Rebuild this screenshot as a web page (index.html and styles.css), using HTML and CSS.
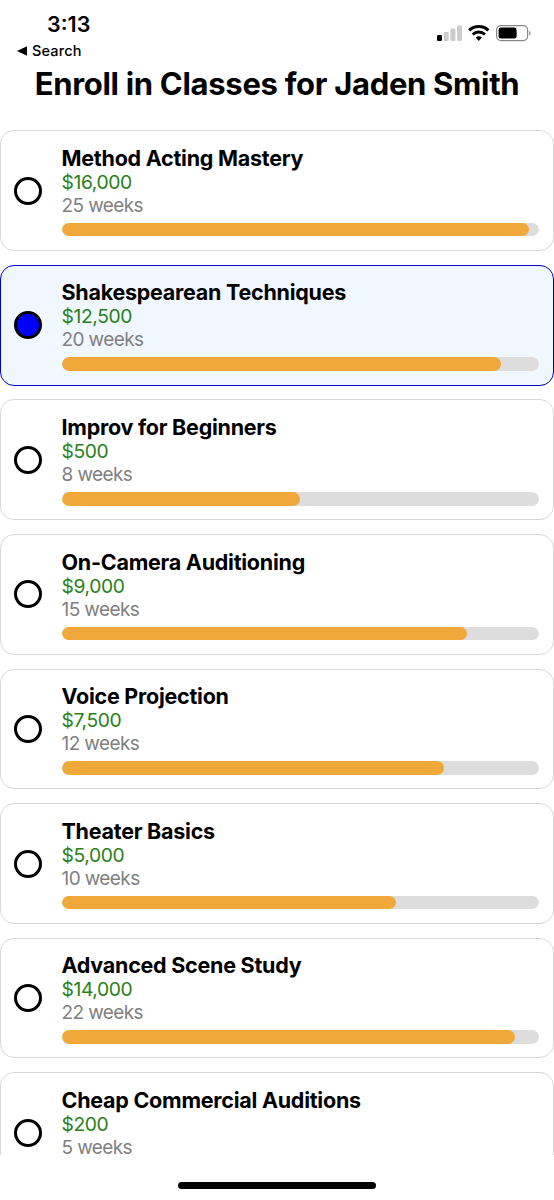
FILE: index.html
```html
<!DOCTYPE html>
<html lang="en">
<head>
    <meta charset="UTF-8">
    <meta name="viewport" content="width=device-width, initial-scale=1.0">
    <title>Enroll in Classes</title>
    <link rel="stylesheet" href="styles.css">
</head>
<body>
    <div class="status-bar">
        <div class="status-left">
            <div class="time">3:13</div>
            <div class="back">
                <svg class="back-arrow" viewBox="0 0 10 10"><path d="M0 5 L10 0.3 V9.7 Z"/></svg>
                <span>Search</span>
            </div>
        </div>
        <svg class="status-icons" width="96" height="20" viewBox="0 0 96 20">
            <!-- signal -->
            <rect x="1" y="12" width="5" height="6" rx="1.3" fill="#000"/>
            <rect x="7.7" y="9" width="5" height="9" rx="1.3" fill="#ccc"/>
            <rect x="14.4" y="5.5" width="5" height="12.5" rx="1.3" fill="#ccc"/>
            <rect x="21" y="2.5" width="5" height="15.5" rx="1.3" fill="#ccc"/>
            <!-- wifi -->
            <g fill="none" stroke="#000" stroke-width="3">
                <path d="M33.2 7.4 A14 14 0 0 1 52.4 7.4"/>
                <path d="M36.7 11.5 A8.8 8.8 0 0 1 48.9 11.5"/>
            </g>
            <path d="M39.7 14.6 A4.6 4.6 0 0 1 45.9 14.6 L42.8 17.9 Z" fill="#000"/>
            <!-- battery -->
            <rect x="60.6" y="2.6" width="31" height="15" rx="4.4" fill="#fff" stroke="#888" stroke-width="1.2"/>
            <rect x="62.6" y="4.6" width="18" height="11" rx="2.4" fill="#000"/>
            <path d="M93.2 7.8 A2.8 2.8 0 0 1 93.2 12.6 Z" fill="#888"/>
        </svg>
    </div>

    <h1>Enroll in Classes for Jaden Smith</h1>

    <div class="class-list">
        <div class="card">
            <div class="radio"></div>
            <div class="info">
                <div class="name">Method Acting Mastery</div>
                <div class="price">$16,000</div>
                <div class="weeks">25 weeks</div>
                <div class="progress"><div class="fill" style="width: 98%"></div></div>
            </div>
        </div>
        <div class="card selected">
            <div class="radio"></div>
            <div class="info">
                <div class="name">Shakespearean Techniques</div>
                <div class="price">$12,500</div>
                <div class="weeks">20 weeks</div>
                <div class="progress"><div class="fill" style="width: 92%"></div></div>
            </div>
        </div>
        <div class="card">
            <div class="radio"></div>
            <div class="info">
                <div class="name">Improv for Beginners</div>
                <div class="price">$500</div>
                <div class="weeks">8 weeks</div>
                <div class="progress"><div class="fill" style="width: 50%"></div></div>
            </div>
        </div>
        <div class="card">
            <div class="radio"></div>
            <div class="info">
                <div class="name">On-Camera Auditioning</div>
                <div class="price">$9,000</div>
                <div class="weeks">15 weeks</div>
                <div class="progress"><div class="fill" style="width: 85%"></div></div>
            </div>
        </div>
        <div class="card">
            <div class="radio"></div>
            <div class="info">
                <div class="name">Voice Projection</div>
                <div class="price">$7,500</div>
                <div class="weeks">12 weeks</div>
                <div class="progress"><div class="fill" style="width: 80%"></div></div>
            </div>
        </div>
        <div class="card">
            <div class="radio"></div>
            <div class="info">
                <div class="name">Theater Basics</div>
                <div class="price">$5,000</div>
                <div class="weeks">10 weeks</div>
                <div class="progress"><div class="fill" style="width: 70%"></div></div>
            </div>
        </div>
        <div class="card">
            <div class="radio"></div>
            <div class="info">
                <div class="name">Advanced Scene Study</div>
                <div class="price">$14,000</div>
                <div class="weeks">22 weeks</div>
                <div class="progress"><div class="fill" style="width: 95%"></div></div>
            </div>
        </div>
        <div class="card">
            <div class="radio"></div>
            <div class="info">
                <div class="name">Cheap Commercial Auditions</div>
                <div class="price">$200</div>
                <div class="weeks">5 weeks</div>
                <div class="progress"><div class="fill" style="width: 30%"></div></div>
            </div>
        </div>
    </div>

    <div class="home-area">
        <div class="home-indicator"></div>
    </div>
</body>
</html>
```
FILE: styles.css
```css
* {
    box-sizing: border-box;
}
body {
    margin: 0;
    height: 1200px;
    display: flex;
    flex-direction: column;
    overflow: hidden;
    background-color: #fff;
    color: #000;
    font-family: Inter, sans-serif;
}
.status-bar {
    display: flex;
    justify-content: space-between;
    height: 62px;
    padding: 11px 22px 0 17px;
}
.time {
    padding-left: 30px;
    font-size: 21.5px;
    font-weight: 600;
    line-height: 26px;
}
.back {
    display: flex;
    align-items: center;
    gap: 5px;
    margin-top: 4px;
    font-size: 14.5px;
    font-weight: 500;
    line-height: 20px;
    letter-spacing: 0.15px;
}
.back-arrow {
    width: 10px;
    height: 10px;
}
.status-icons {
    margin-top: 12px;
}
h1 {
    margin: 0;
    height: 68.3px;
    font-size: 31px;
    font-weight: 700;
    line-height: 43px;
    text-align: center;
    white-space: nowrap;
    letter-spacing: -0.3px;
}
.class-list {
    display: flex;
    flex-direction: column;
    gap: 13.9px;
    height: 1024.7px;
    flex-shrink: 0;
    overflow: hidden;
}
.card {
    display: flex;
    align-items: center;
    flex-shrink: 0;
    gap: 19.5px;
    height: 120.7px;
    padding: 0 14px 0 13px;
    border: 1px solid #d8d8d8;
    border-radius: 14px;
}
.card.selected {
    background-color: #f0f7ff;
    border-color: #0000cd;
}
.radio {
    width: 28px;
    height: 28px;
    border: 3px solid #000;
    border-radius: 50%;
}
.selected .radio {
    background-color: #0000ff;
}
.info {
    flex: 1;
}
.name {
    font-size: 21.5px;
    font-weight: 700;
    line-height: 26px;
    letter-spacing: -0.25px;
}
.price {
    color: #29801a;
    font-size: 19.3px;
    line-height: 23px;
    letter-spacing: -0.4px;
}
.weeks {
    color: #808080;
    font-size: 19px;
    line-height: 23px;
    letter-spacing: -0.6px;
}
.progress {
    height: 13.6px;
    margin-top: 6px;
    background-color: #ddd;
    border-radius: 7px;
    overflow: hidden;
}
.fill {
    height: 100%;
    background-color: #f1a83b;
    border-radius: 7px;
}
.home-area {
    display: flex;
    justify-content: center;
    padding-top: 27px;
}
.home-indicator {
    width: 198px;
    height: 7px;
    background-color: #000;
    border-radius: 4px;
}
```
